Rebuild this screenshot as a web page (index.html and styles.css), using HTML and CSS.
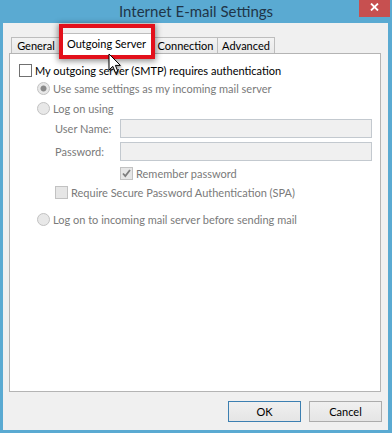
FILE: index.html
```html
<!DOCTYPE html>
<html>
<head>
<meta charset="utf-8">
<link rel="stylesheet" href="styles.css">
</head>
<body>
<div class="window">
  <div class="titlebar">
    <h1 class="title">Internet E-mail Settings</h1>
    <div class="close"><svg width="9" height="8" viewBox="0 0 9 8"><path d="M1 0.5 L8 7.5 M8 0.5 L1 7.5" stroke="#fff" stroke-width="1.8"/></svg></div>
  </div>
  <div class="client">
    <div class="tabs">
      <div class="tab tab-general">General</div>
      <div class="tab tab-active">Outgoing Server</div>
      <div class="tab tab-conn">Connection</div>
      <div class="tab tab-adv">Advanced</div>
    </div>
    <div class="highlight"></div>
    <svg class="cursor" width="14" height="22" viewBox="0 0 14 22"><path d="M1 1 L1 17 L4.8 13.3 L7.4 19.5 L9.9 18.5 L7.4 12.4 L12.4 12.4 Z" fill="#fff" stroke="#000" stroke-width="1" stroke-linejoin="miter"/></svg>
    <div class="panel">
      <div class="row row-auth">
        <span class="box"></span><span class="label">My outgoing server (SMTP) requires authentication</span>
      </div>
      <div class="row row-radio row-same">
        <span class="radio radio-on"></span><span class="label dim">Use same settings as my incoming mail server</span>
      </div>
      <div class="row row-radio row-logon">
        <span class="radio"></span><span class="label dim">Log on using</span>
      </div>
      <div class="field field-user">
        <span class="field-label dim">User Name:</span><span class="input"></span>
      </div>
      <div class="field field-pass">
        <span class="field-label dim">Password:</span><span class="input"></span>
      </div>
      <div class="row row-remember">
        <span class="box box-off box-checked"><svg width="11" height="11" viewBox="0 0 11 11"><path d="M2 5.5 L4.3 8 L9 2" fill="none" stroke="#7d7d7d" stroke-width="1.8"/></svg></span><span class="label dim">Remember password</span>
      </div>
      <div class="row row-spa">
        <span class="box box-off"></span><span class="label dim">Require Secure Password Authentication (SPA)</span>
      </div>
      <div class="row row-radio row-before">
        <span class="radio"></span><span class="label dim">Log on to incoming mail server before sending mail</span>
      </div>
    </div>
    <div class="buttons">
      <div class="btn btn-default">OK</div>
      <div class="btn">Cancel</div>
    </div>
  </div>
</div>
</body>
</html>
```
FILE: styles.css
```css
* { box-sizing: border-box; }
body {
  margin: 0;
  font-family: Lato, "Noto Sans", sans-serif;
  font-size: 11px;
  color: #000;
}
.window {
  width: 392px;
  height: 433px;
  background: #5aaad2;
  display: flex;
  flex-direction: column;
  padding: 0 4px 3px 3px;
}
.titlebar {
  height: 23px;
  display: grid;
  grid-template-columns: 1fr auto 1fr;
  align-items: start;
  margin: 0 -4px 0 -3px;
}
.title {
  grid-column: 2;
  margin: 0;
  font-size: 15px;
  font-weight: normal;
  color: #1f3548;
  line-height: 23px;
  white-space: nowrap;
}
.close {
  grid-column: 3;
  justify-self: end;
  width: 31px;
  height: 17px;
  margin-right: 2px;
  background: #c75050;
  display: flex;
  justify-content: center;
  padding-top: 3px;
}
.client {
  flex: 1;
  background: #f0f0f0;
  position: relative;
  padding: 10px 7px 0 6px;
  display: flex;
  flex-direction: column;
}
.tabs {
  display: flex;
  align-items: flex-end;
  height: 20px;
  padding-left: 2px;
  position: relative;
  z-index: 1;
}
.tab {
  height: 16px;
  border: 1px solid #bdbdbd;
  border-bottom: none;
  background: linear-gradient(#f3f3f3, #e9e9e9);
  display: flex;
  align-items: center;
  justify-content: center;
  white-space: nowrap;
}
.tab-general { width: 50px; }
.tab-active {
  width: 93px;
  height: 21px;
  margin-left: -1px;
  margin-bottom: -1px;
  background: #fff;
  padding-bottom: 1px;
}
.tab-conn { width: 65px; }
.tab-adv { width: 58px; margin-left: -1px; }
.highlight {
  position: absolute;
  left: 56px;
  top: 1px;
  width: 96px;
  height: 35px;
  border: 4px solid #e3101b;
  box-shadow: 0 1px 6px 1px rgba(0, 0, 0, 0.45);
  z-index: 2;
}
.cursor {
  position: absolute;
  left: 105px;
  top: 30px;
  z-index: 3;
  filter: drop-shadow(1px 2px 1px rgba(0, 0, 0, 0.35));
}
.panel {
  height: 339px;
  border: 1px solid #b4b4b4;
  background: #fff;
  padding-top: 8px;
  display: flex;
  flex-direction: column;
}
.row {
  height: 16px;
  display: flex;
  align-items: center;
  gap: 3px;
  white-space: nowrap;
}
.row-auth { padding-left: 9px; }
.row-radio { padding-left: 27px; }
.row-same { margin-top: 2px; }
.row-logon { margin-top: 4px; }
.row-remember { margin-top: 4px; padding-left: 110px; }
.row-spa { margin-top: 3px; padding-left: 45px; }
.row-before { margin-top: 11px; }
.dim { color: #7a7a7a; }
.box {
  width: 13px;
  height: 13px;
  border: 1px solid #707070;
  background: #fff;
  display: flex;
  align-items: center;
  justify-content: center;
}
.box-off {
  border-color: #c2c2c2;
  background: #e6e6e6;
}
.radio {
  width: 13px;
  height: 13px;
  border-radius: 50%;
  border: 1px solid #c2c2c2;
  background: #e8e8e8;
}
.radio-on {
  background: radial-gradient(circle, #8a8a8a 0, #8a8a8a 2.6px, #e8e8e8 3.4px);
}
.field {
  height: 19px;
  display: flex;
  align-items: center;
  padding-left: 45px;
}
.field-user { margin-top: 3px; }
.field-pass { margin-top: 4px; }
.field-label { width: 65px; }
.input {
  width: 252px;
  height: 19px;
  border: 1px solid #c3c9cf;
  background: #f0f0f0;
}
.buttons {
  display: flex;
  justify-content: flex-end;
  gap: 8px;
  margin-top: 9px;
  margin-right: -1px;
}
.btn {
  width: 73px;
  height: 21px;
  border: 1px solid #acacac;
  background: linear-gradient(#f0f0f0, #e5e5e5);
  display: flex;
  align-items: center;
  justify-content: center;
}
.btn-default { border-color: #3c7fb1; }
```
